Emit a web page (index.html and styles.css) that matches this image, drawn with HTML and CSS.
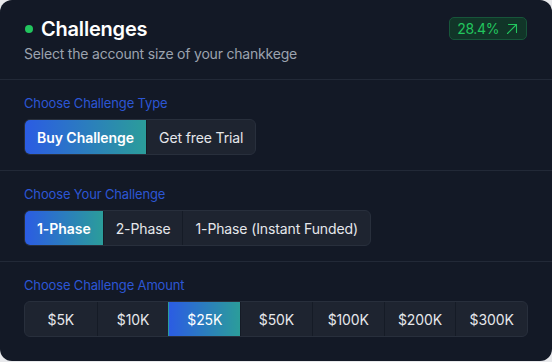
FILE: index.html
```html
<!DOCTYPE html>
<html lang="en">
<head>
<meta charset="utf-8">
<title>Challenges</title>
<link rel="stylesheet" href="styles.css">
</head>
<body>
<div class="card">
  <div class="header">
    <div class="head-text">
      <h1 class="title"><span class="dot"></span>Challenges</h1>
      <p class="subtitle">Select the account size of your chankkege</p>
    </div>
    <div class="badge">28.4%
      <svg class="arrow" width="12" height="12" viewBox="0 0 12 12" fill="none" stroke="currentColor" stroke-width="1.1" stroke-linecap="round" stroke-linejoin="round"><path d="M1.5 10.5L10.5 1.5"/><path d="M2.5 1.5H10.5V9.5"/></svg>
    </div>
  </div>
  <div class="section">
    <div class="label">Choose Challenge Type</div>
    <div class="group">
      <button class="opt active bold">Buy Challenge</button>
      <button class="opt">Get free Trial</button>
    </div>
  </div>
  <div class="section">
    <div class="label">Choose Your Challenge</div>
    <div class="group">
      <button class="opt active bold">1-Phase</button>
      <button class="opt">2-Phase</button>
      <button class="opt">1-Phase (Instant Funded)</button>
    </div>
  </div>
  <div class="section">
    <div class="label">Choose Challenge Amount</div>
    <div class="group amounts">
      <button class="opt">$5K</button>
      <button class="opt">$10K</button>
      <button class="opt active">$25K</button>
      <button class="opt">$50K</button>
      <button class="opt">$100K</button>
      <button class="opt">$200K</button>
      <button class="opt">$300K</button>
    </div>
  </div>
</div>
</body>
</html>
```
FILE: styles.css
```css
* { box-sizing: border-box; }
html, body { margin: 0; padding: 0; }
body {
  background: #e8e9ec;
  font-family: Inter, "Noto Sans", sans-serif;
  width: 552px;
  height: 362px;
}
.card {
  width: 552px;
  height: 361px;
  background: #131926;
  border-radius: 12px;
  overflow: hidden;
}
.header {
  display: flex;
  justify-content: space-between;
  align-items: flex-start;
  padding: 16px 25px 15px 24px;
}
.title {
  margin: 0;
  display: flex;
  align-items: center;
  gap: 8px;
  font-size: 20px;
  line-height: 26px;
  font-weight: 600;
  letter-spacing: -0.2px;
  color: #ffffff;
}
.dot {
  width: 8px;
  height: 8px;
  border-radius: 50%;
  background: #22c55e;
  margin-left: 1px;
}
.subtitle {
  margin: 2px 0 0;
  font-size: 14px;
  line-height: 20px;
  letter-spacing: -0.2px;
  color: #9ca3af;
}
.badge {
  margin-top: 1px;
  display: flex;
  align-items: center;
  gap: 7px;
  height: 23px;
  padding: 0 8px 0 7px;
  border: 1px solid #17553a;
  background: #113528;
  border-radius: 5px;
  color: #22c55e;
  font-size: 14px;
  letter-spacing: -0.4px;
}
.section {
  border-top: 1px solid #222937;
  padding: 15px 24px 15px;
}
.label {
  font-size: 13px;
  line-height: 16px;
  letter-spacing: -0.15px;
  color: #2c56d4;
  margin-bottom: 8px;
}
.group {
  display: inline-flex;
  height: 36px;
  background: #1e2430;
  border: 1px solid #282f3c;
  border-radius: 6px;
  overflow: hidden;
}
.opt {
  font-family: inherit;
  font-size: 14px;
  letter-spacing: -0.12px;
  color: #e5e7eb;
  background: transparent;
  border: 0;
  border-left: 1px solid #151b26;
  padding: 0 12px;
  margin: 0;
  height: 100%;
}
.opt:first-child { border-left: 0; }
.opt.bold { font-weight: 600; letter-spacing: -0.05px; }
.opt.active {
  background: linear-gradient(90deg, #2b5ce3 0%, #2b9d9a 100%);
  color: #ffffff;
  border-left-color: transparent;
}
.amounts {
  display: grid;
  grid-template-columns: repeat(7, 1fr);
  width: 504px;
}
.amounts .opt { padding: 0; }
```
